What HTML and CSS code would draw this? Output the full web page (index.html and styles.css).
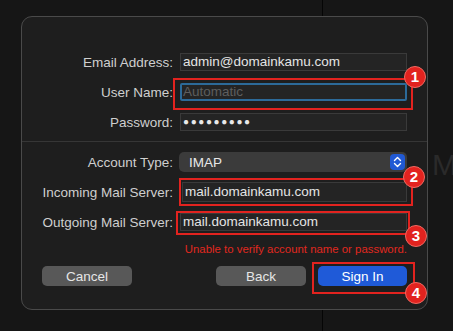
FILE: index.html
```html
<!DOCTYPE html>
<html lang="en">
<head>
    <meta charset="UTF-8">
    <meta name="viewport" content="width=device-width, initial-scale=1.0">
    <title>Mail Account</title>
    <link rel="stylesheet" href="styles.css">
</head>
<body>

<div class="backdrop">
    <div class="split"></div>
    <span class="ghost">M</span>

    <div class="sheet">
        <div class="row">
            <label class="lbl">Email Address:</label>
            <div class="field">admin@domainkamu.com</div>
        </div>

        <div class="row mark-wrap">
            <label class="lbl">User Name:</label>
            <div class="field focus"><span class="placeholder">Automatic</span></div>
            <div class="mark mark-user"></div>
            <span class="badge badge-user">1</span>
        </div>

        <div class="row row-pass">
            <label class="lbl">Password:</label>
            <div class="field dots">●●●●●●●●●</div>
        </div>

        <div class="divider"></div>

        <div class="row row-type">
            <label class="lbl">Account Type:</label>
            <div class="popup">
                <span>IMAP</span>
                <span class="stepper">
                    <svg width="9" height="12" viewBox="0 0 9 12"><path d="M1.5 4.5 L4.5 1.5 L7.5 4.5 M1.5 7.5 L4.5 10.5 L7.5 7.5" fill="none" stroke="#fff" stroke-width="1.4" stroke-linecap="round" stroke-linejoin="round"/></svg>
                </span>
            </div>
        </div>

        <div class="row row-in mark-wrap">
            <label class="lbl">Incoming Mail Server:</label>
            <div class="field tall">mail.domainkamu.com</div>
            <div class="mark mark-in"></div>
            <span class="badge badge-in">2</span>
        </div>

        <div class="row row-out mark-wrap">
            <label class="lbl">Outgoing Mail Server:</label>
            <div class="field">mail.domainkamu.com</div>
            <div class="mark mark-out"></div>
            <span class="badge badge-out">3</span>
        </div>

        <p class="error">Unable to verify account name or password.</p>

        <div class="buttons">
            <button class="btn">Cancel</button>
            <div class="right-btns">
                <button class="btn">Back</button>
                <div class="mark-wrap">
                    <button class="btn primary">Sign In</button>
                    <div class="mark mark-sign"></div>
                    <span class="badge badge-sign">4</span>
                </div>
            </div>
        </div>
    </div>
</div>

</body>
</html>
```

FILE: styles.css
```css
body {
    margin: 0;
    padding: 0;
    background-color: #0e0e0e;
    font-family: "Liberation Sans", Arial, sans-serif;
    font-size: 13.5px;
    color: #e4e4e4;
}
.backdrop {
    position: relative;
    width: 453px;
    height: 331px;
    overflow: hidden;
    background-color: #161616;
    padding: 16px 0 0 21px;
    box-sizing: border-box;
}
.split {
    position: absolute;
    left: 322px;
    top: 0;
    bottom: 0;
    width: 1px;
    background-color: #050505;
}
.ghost {
    position: absolute;
    left: 432px;
    top: 148px;
    font-size: 30px;
    color: #2a2a2a;
}
.sheet {
    position: relative;
    width: 407px;
    height: 294px;
    box-sizing: border-box;
    background-color: #1e1e1e;
    border: 1px solid #4a4a4a;
    border-radius: 11px;
    padding: 36px 20px 0 0;
}
.row {
    display: flex;
    align-items: center;
    height: 18px;
    margin-bottom: 12px;
}
.lbl {
    width: 151px;
    text-align: right;
    color: #cfcfcf;
    flex-shrink: 0;
}
.field {
    margin-left: 7px;
    flex: 1;
    height: 18px;
    line-height: 16px;
    box-sizing: border-box;
    background-color: #242424;
    border: 1px solid #3a3a3a;
    padding-left: 2px;
    white-space: nowrap;
}
.field.focus {
    border: 2px solid #2c6a99;
    border-radius: 2px;
    line-height: 14px;
    padding-left: 1px;
}
.placeholder {
    color: #5e5e5e;
}
.dots {
    font-size: 10px;
    letter-spacing: 1.6px;
    color: #e8e8e8;
}
.field.tall {
    margin-left: 9px;
    height: 20px;
    line-height: 18px;
}
.row-pass {
    margin-top: 2px;
    margin-bottom: 10px;
}
.divider {
    height: 1px;
    background-color: #363636;
    margin-right: -20px;
    margin-bottom: 10px;
}
.row-type {
    height: 20px;
    margin-bottom: 10px;
}
.popup {
    margin-left: 6px;
    flex: 1;
    height: 20px;
    box-sizing: border-box;
    display: flex;
    align-items: center;
    justify-content: space-between;
    background-color: #3b3b3b;
    border-radius: 5px;
    padding: 0 2px 0 10px;
    color: #e8e8e8;
}
.stepper {
    display: flex;
    align-items: center;
    justify-content: center;
    width: 15px;
    height: 16px;
    background-color: #2159d4;
    border-radius: 4px;
}
.stepper svg {
    display: block;
}
.row-in {
    height: 20px;
    margin-bottom: 11px;
}
.row-out {
    margin-bottom: 0;
}
.mark-wrap {
    position: relative;
}
.mark {
    position: absolute;
    border: 2px solid #e2231f;
    box-sizing: border-box;
}
.mark-user {
    left: 151px;
    top: -5px;
    width: 240px;
    height: 32px;
}
.mark-in {
    left: 157px;
    top: -4px;
    width: 234px;
    height: 28px;
}
.mark-out {
    left: 154px;
    top: -2px;
    width: 234px;
    height: 24px;
}
.badge {
    position: absolute;
    width: 22px;
    height: 22px;
    box-sizing: border-box;
    border-radius: 50%;
    background-color: #e2231f;
    border: 1px solid #f06a62;
    color: #ffffff;
    font-weight: bold;
    font-size: 15px;
    line-height: 20px;
    text-align: center;
}
.badge-user {
    left: 382px;
    top: -17px;
}
.badge-in {
    left: 381px;
    top: -16px;
}
.badge-out {
    left: 383px;
    top: 12px;
}
.error {
    margin: 11px 0 0 0;
    height: 14px;
    line-height: 14px;
    text-align: right;
    color: #e0281f;
    font-size: 11.4px;
}
.buttons {
    display: flex;
    justify-content: space-between;
    align-items: center;
    margin-top: 10px;
    padding-left: 20px;
}
.right-btns {
    display: flex;
    gap: 12px;
}
.btn {
    width: 90px;
    height: 20px;
    border: none;
    border-radius: 5px;
    background-color: #585858;
    color: #e6e6e6;
    font-family: "Liberation Sans", Arial, sans-serif;
    font-size: 13.5px;
    padding: 0;
    cursor: pointer;
}
.btn.primary {
    width: 89px;
    background-color: #1f5ad8;
    color: #ffffff;
}
.mark-sign {
    left: -6px;
    top: -4px;
    width: 103px;
    height: 32px;
}
.badge-sign {
    left: 87px;
    top: 16px;
}
```
